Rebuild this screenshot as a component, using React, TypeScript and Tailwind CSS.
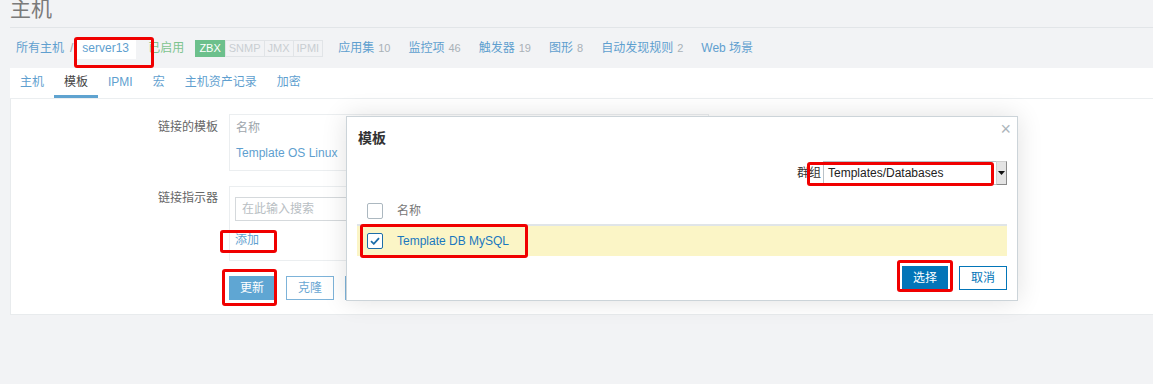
import React from "react";

const font = { fontFamily: '"Liberation Sans", "Noto Sans CJK SC", sans-serif' };

function RedBox({ className }: { className: string }) {
    return <div className={`absolute border-[3px] border-[#f00000] rounded-[3px] pointer-events-none ${className}`} />;
}

function CheckBox({ checked }: { checked?: boolean }) {
    return (
        <span
            className={`flex items-center justify-center w-[16px] h-[16px] rounded-[2px] border bg-white ${
                checked ? "border-[#1d6ea8]" : "border-[#acb8c0]"
            }`}
        >
            {checked && (
                <svg width="10" height="8" viewBox="0 0 10 8">
                    <path d="M1 4.2 L3.8 6.8 L9 1.2" fill="none" stroke="#1d6ea8" strokeWidth="1.8" />
                </svg>
            )}
        </span>
    );
}

const navItems = [
    { label: "应用集", count: "10" },
    { label: "监控项", count: "46" },
    { label: "触发器", count: "19" },
    { label: "图形", count: "8" },
    { label: "自动发现规则", count: "2" },
    { label: "Web 场景", count: "" },
];

const tabs = ["主机", "模板", "IPMI", "宏", "主机资产记录", "加密"];

export default function App() {
    return (
        <div className="relative w-[1153px] h-[384px] overflow-hidden bg-[#f2f3f5] pl-[10px] text-[12px]" style={font}>
            {/* header */}
            <div className="h-[28px] border-b border-[#e2e5e8] overflow-hidden">
                <h1 className="text-[21px] leading-[21px] -mt-[2px] text-[#7a7a7a]">主机</h1>
            </div>

            {/* breadcrumb / nav */}
            <div className="h-[40px] flex items-center">
                <span className="ml-[6px] text-[#5f9fcf]">所有主机</span>
                <span className="ml-[6px] text-[#9aa3aa]">/</span>
                <span className="ml-[2px] h-[22px] w-[61px] bg-white flex items-center pl-[7px] text-[#5f9fcf]">server13</span>
                <span className="ml-[12px] text-[#7ec48f]">已启用</span>
                <div className="ml-[11px] flex text-[11px] leading-[15px]">
                    <span className="px-[3px] bg-[#6cc08c] text-white border border-[#6cc08c]">ZBX</span>
                    <span className="px-[3px] text-[#c9ced2] border border-[#e1e4e7]">SNMP</span>
                    <span className="px-[3px] text-[#c9ced2] border border-l-0 border-[#e1e4e7]">JMX</span>
                    <span className="px-[3px] text-[#c9ced2] border border-l-0 border-[#e1e4e7]">IPMI</span>
                </div>
                <div className="ml-[15px] flex gap-[18px]">
                    {navItems.map((n) => (
                        <span key={n.label} className="text-[#5f9fcf]">
                            {n.label}
                            {n.count && <span className="ml-[4px] text-[11px] text-[#a9b1b7]">{n.count}</span>}
                        </span>
                    ))}
                </div>
            </div>

            {/* tabs */}
            <div className="h-[31px] bg-white border-b border-[#ebeef0] flex">
                {tabs.map((t, i) => (
                    <div
                        key={t}
                        className={`px-[10px] flex items-center border-b-[3px] ${
                            i === 1 ? "border-[#5fa3d0] text-[#444]" : "border-transparent text-[#5f9fcf]"
                        }`}
                    >
                        {t}
                    </div>
                ))}
            </div>

            {/* form panel */}
            <div className="h-[216px] bg-white border-l border-b border-[#e8ebed] pt-[15px]">
                <div className="flex">
                    <div className="w-[207px] text-right pt-[4px] text-[#666]">链接的模板</div>
                    <div className="ml-[11px] w-[480px] h-[57px] border border-[#ebeef0] px-[6px] pt-[4px]">
                        <div className="text-[#9ea6ac] leading-[18px]">名称</div>
                        <div className="mt-[7px] text-[#5f9fcf] leading-[18px]">Template OS Linux</div>
                    </div>
                </div>
                <div className="flex mt-[15px]">
                    <div className="w-[207px] text-right pt-[3px] text-[#666]">链接指示器</div>
                    <div className="ml-[11px] w-[480px] h-[75px] border border-[#ebeef0] px-[5px] pt-[10px]">
                        <div className="w-[300px] h-[24px] border border-[#d5d9dc] flex items-center pl-[6px] text-[#b8bec3]">
                            在此输入搜索
                        </div>
                        <div className="mt-[10px] text-[#5f9fcf]">添加</div>
                    </div>
                </div>
                <div className="flex mt-[15px] ml-[218px] gap-[11px]">
                    <button className="w-[46px] h-[24px] bg-[#5fa6d3] text-white">更新</button>
                    <button className="w-[48px] h-[24px] border border-[#7db3d9] text-[#6aa7d3]">克隆</button>
                    <button className="w-[48px] h-[24px] border border-[#7db3d9] text-[#6aa7d3]">删除</button>
                </div>
            </div>

            {/* modal */}
            <div className="absolute left-[346px] top-[116px] w-[672px] h-[185px] bg-white border border-[#ccd4d9] shadow-[0_0_24px_rgba(0,0,0,0.12)] px-[10px]">
                <div className="absolute right-[6px] top-[3px] text-[#acb5bb] text-[18px] leading-[18px]">×</div>
                <div className="pt-[12px] pl-[1px] text-[14px] font-bold text-[#333] leading-[18px]">模板</div>
                <div className="mt-[14px] flex justify-end items-center">
                    <span className="text-[#333] mr-[2px]">群组</span>
                    <div className="flex h-[24px]">
                        <div className="w-[173px] border border-[#b9c2c8] border-r-0 flex items-center pl-[4px] text-[#222]">
                            Templates/Databases
                        </div>
                        <div className="w-[11px] bg-[#e4e4e4] border border-[#8a8a8a] border-l-[#d0d0d0] border-t-[#d0d0d0] flex items-center justify-center">
                            <svg width="7" height="4" viewBox="0 0 7 4">
                                <path d="M0 0 H7 L3.5 4 Z" fill="#111" />
                            </svg>
                        </div>
                    </div>
                </div>
                <div className="mt-[13px] flex items-center h-[28px] border-b-2 border-[#e0e5e8]">
                    <span className="ml-[10px]"><CheckBox /></span>
                    <span className="ml-[14px] text-[#777]">名称</span>
                </div>
                <div className="flex items-center h-[30px] bg-[#fbf5c6]">
                    <span className="ml-[10px]"><CheckBox checked /></span>
                    <span className="ml-[14px] text-[#1a78bf]">Template DB MySQL</span>
                </div>
                <div className="mt-[10px] flex justify-end gap-[11px]">
                    <button className="w-[46px] h-[24px] bg-[#0275b8] text-white">选择</button>
                    <button className="w-[48px] h-[24px] border border-[#0275b8] text-[#0275b8]">取消</button>
                </div>
            </div>

            {/* annotations */}
            <RedBox className="left-[74px] top-[37px] w-[80px] h-[31px]" />
            <RedBox className="left-[220px] top-[230px] w-[57px] h-[23px]" />
            <RedBox className="left-[222px] top-[269px] w-[55px] h-[37px]" />
            <RedBox className="left-[807px] top-[162px] w-[187px] h-[24px]" />
            <RedBox className="left-[360px] top-[224px] w-[168px] h-[34px]" />
            <RedBox className="left-[897px] top-[260px] w-[56px] h-[32px]" />
        </div>
    );
}
